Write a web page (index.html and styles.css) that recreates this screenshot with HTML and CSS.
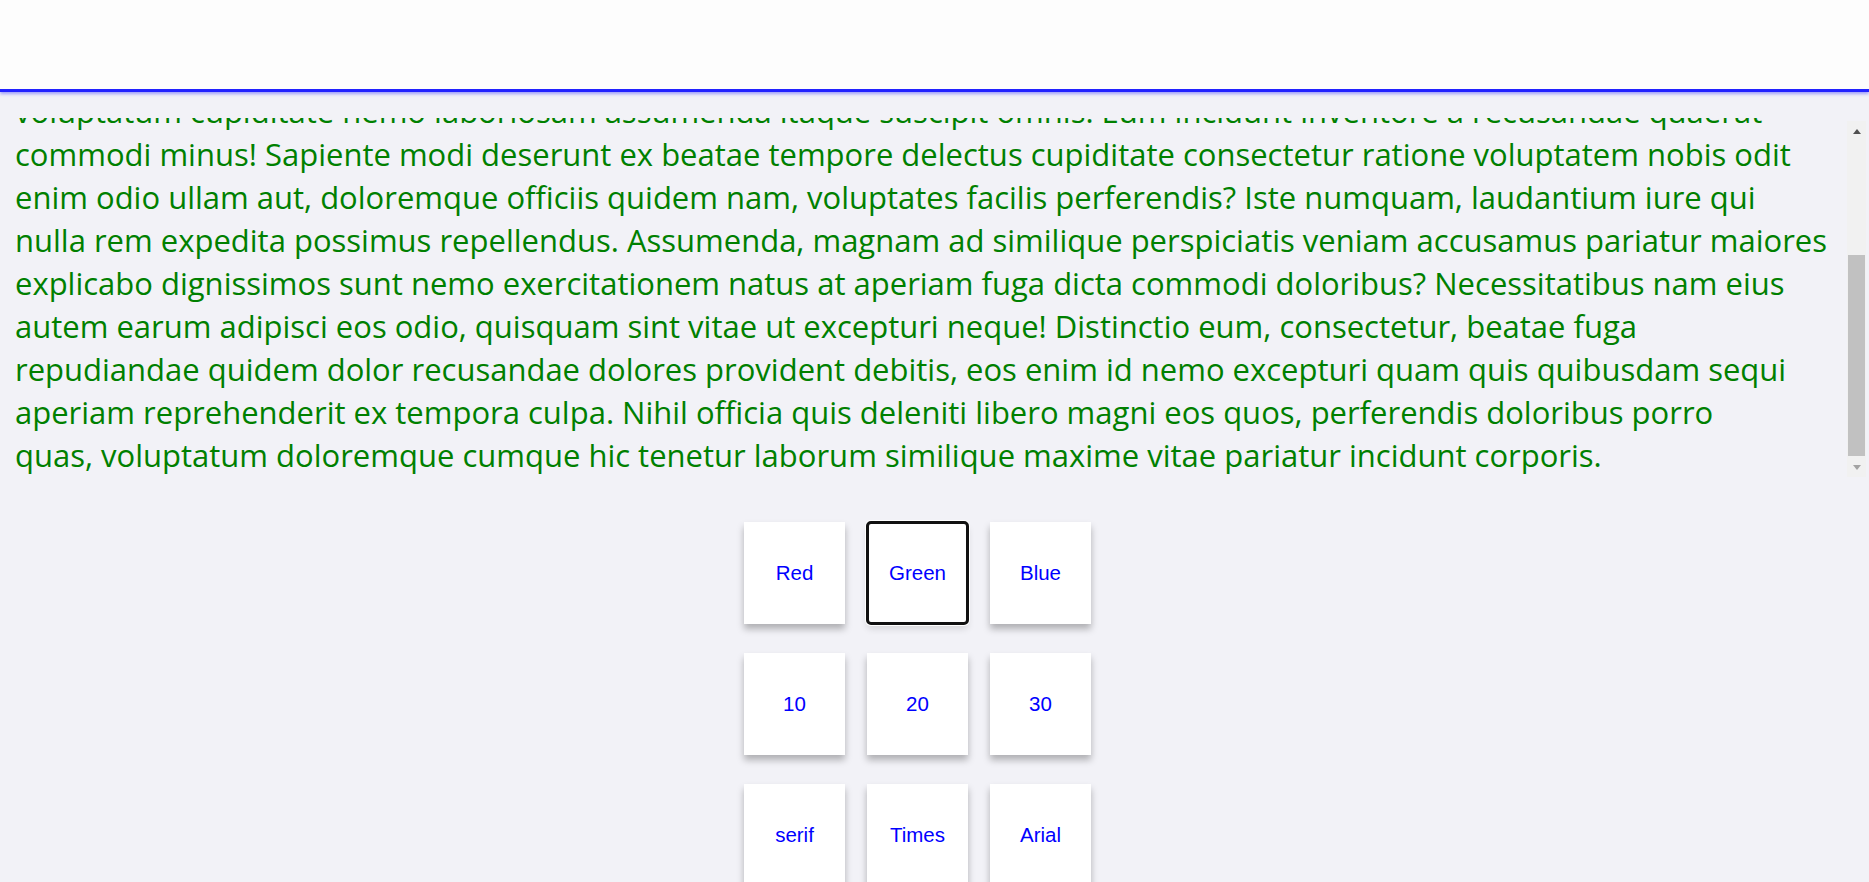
FILE: index.html
```html
<!DOCTYPE html>
<html lang="la">
<head>
<meta charset="utf-8">
<title>Text settings</title>
<link rel="stylesheet" href="styles.css">
</head>
<body>
<header class="topbar"></header>
<main class="page">
  <div class="viewport">
    <div class="scroller">
      <p class="copy">Lorem ipsum dolor sit amet consectetur adipisicing elit. Quibusdam, voluptas eveniet ipsa doloremque officia<br>
      magnam dolorum reiciendis aliquid tempora illum, earum ratione accusantium nesciunt quo harum natus sapiente<br>
      veritatis ducimus! Quod laboriosam nulla consequatur error eaque officiis provident libero minima obcaecati<br>
      maiores, impedit amet rerum facere tempore dicta sequi asperiores soluta. Quasi explicabo architecto iusto<br>
      voluptatum cupiditate nemo laboriosam assumenda itaque suscipit omnis. Eum incidunt inventore a recusandae quaerat<br>
      commodi minus! Sapiente modi deserunt ex beatae tempore delectus cupiditate consectetur ratione voluptatem nobis odit<br>
      enim odio ullam aut, doloremque officiis quidem nam, voluptates facilis perferendis? Iste numquam, laudantium iure qui<br>
      nulla rem expedita possimus repellendus. Assumenda, magnam ad similique perspiciatis veniam accusamus pariatur maiores<br>
      explicabo dignissimos sunt nemo exercitationem natus at aperiam fuga dicta commodi doloribus? Necessitatibus nam eius<br>
      autem earum adipisci eos odio, quisquam sint vitae ut excepturi neque! Distinctio eum, consectetur, beatae fuga<br>
      repudiandae quidem dolor recusandae dolores provident debitis, eos enim id nemo excepturi quam quis quibusdam sequi<br>
      aperiam reprehenderit ex tempora culpa. Nihil officia quis deleniti libero magni eos quos, perferendis doloribus porro<br>
      quas, voluptatum doloremque cumque hic tenetur laborum similique maxime vitae pariatur incidunt corporis.</p>
    </div>
    <div class="vbar" aria-hidden="true">
      <div class="vbar__btn"><span class="vbar__arrow vbar__arrow--up"></span></div>
      <div class="vbar__track"><div class="vbar__thumb"></div></div>
      <div class="vbar__btn"><span class="vbar__arrow vbar__arrow--down"></span></div>
    </div>
  </div>
  <div class="controls">
    <div class="grid">
      <button class="tile" type="button">Red</button>
      <button class="tile tile--focused" type="button">Green</button>
      <button class="tile" type="button">Blue</button>
      <button class="tile" type="button">10</button>
      <button class="tile" type="button">20</button>
      <button class="tile" type="button">30</button>
      <button class="tile" type="button">serif</button>
      <button class="tile" type="button">Times</button>
      <button class="tile" type="button">Arial</button>
    </div>
  </div>
</main>
</body>
</html>
```
FILE: styles.css
```css
html {
  overflow: hidden;
}

body {
  margin: 0;
  background: #f2f2f7;
  font-family: "Liberation Sans", Arial, sans-serif;
}

.topbar {
  position: fixed;
  top: 0;
  left: 0;
  right: 0;
  height: 89px;
  background: #fdfdfd;
  border-bottom: 3px solid #2222ff;
  box-shadow: 0 2px 3px rgba(60, 60, 255, 0.45);
  z-index: 5;
}

.page {
  padding-top: 118px;
}

.viewport {
  display: flex;
  margin-left: 10px;
  width: 1856px;
  height: 359px;
}

.scroller {
  flex: 1;
  min-width: 0;
  overflow-y: auto;
  overflow-x: hidden;
  scrollbar-width: none;
  display: flex;
  flex-direction: column-reverse;
  padding-left: 5px;
}

.copy {
  margin: 0;
  color: #008000;
  font-family: "Open Sans", "Noto Sans", sans-serif;
  font-size: 31px;
  line-height: 43px;
  white-space: nowrap;
}

.vbar {
  width: 19px;
  margin-top: 3px;
  display: flex;
  flex-direction: column;
  background: #f1f1f1;
}

.vbar__btn {
  height: 17px;
  display: flex;
  align-items: center;
  justify-content: center;
}

.vbar__arrow {
  width: 0;
  height: 0;
  border-left: 4.5px solid transparent;
  border-right: 4.5px solid transparent;
}

.vbar__arrow--up {
  border-bottom: 5px solid #505050;
  margin-top: 3px;
}

.vbar__arrow--down {
  border-top: 5px solid #a3a3a3;
  margin-top: -3px;
}

.vbar__track {
  flex: 1;
  display: flex;
  flex-direction: column;
  justify-content: flex-end;
  padding: 0 1px 4px 1px;
}

.vbar__thumb {
  height: 201px;
  background: #c1c1c1;
}

.controls {
  display: flex;
  justify-content: center;
  padding: 45px 34px 0 0;
}

.grid {
  display: grid;
  grid-template-columns: repeat(3, 101px);
  grid-auto-rows: 102px;
  column-gap: 22px;
  row-gap: 29px;
}

.tile {
  border: none;
  margin: 0;
  padding: 0;
  background: #ffffff;
  color: #0000ff;
  font-family: "Liberation Sans", Arial, sans-serif;
  font-size: 20.5px;
  box-shadow: 0 5px 7px rgba(0, 0, 0, 0.28);
  cursor: pointer;
}

.tile--focused {
  outline: 3px solid #111111;
  outline-offset: -2px;
  border-radius: 4px;
  box-shadow: 0 0 0 2px #ffffff, 0 5px 7px rgba(0, 0, 0, 0.12);
}
```
